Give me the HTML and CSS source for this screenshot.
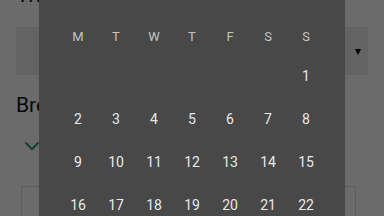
FILE: index.html
```html
<!DOCTYPE html>
<html lang="en">
<head>
    <meta charset="UTF-8">
    <meta name="viewport" content="width=device-width, initial-scale=1.0">
    <title>Trip booking</title>
    <link rel="stylesheet" href="styles.css">
</head>
<body>
    <div class="page">
        <h1 class="page-title">Trip details</h1>

        <div class="select-box">
            <span class="select-value"></span>
            <span class="select-arrow"></span>
        </div>

        <h2 class="section-label">Breakfast</h2>

        <div class="toggle">
            <svg class="chevron" width="16" height="10" viewBox="0 0 16 10">
                <path d="M1.5 1.5 L8 8 L14.5 1.5" fill="none" stroke="currentColor" stroke-width="2"/>
            </svg>
        </div>

        <div class="card"></div>
    </div>

    <div class="overlay">
        <div class="dialog">
            <div class="weekdays">
                <span>M</span><span>T</span><span>W</span><span>T</span><span>F</span><span>S</span><span>S</span>
            </div>
            <div class="days">
                <span></span><span></span><span></span><span></span><span></span><span></span><span>1</span>
                <span>2</span><span>3</span><span>4</span><span>5</span><span>6</span><span>7</span><span>8</span>
                <span>9</span><span>10</span><span>11</span><span>12</span><span>13</span><span>14</span><span>15</span>
                <span>16</span><span>17</span><span>18</span><span>19</span><span>20</span><span>21</span><span>22</span>
                <span>23</span><span>24</span><span>25</span><span>26</span><span>27</span><span>28</span><span>29</span>
            </div>
        </div>
    </div>
</body>
</html>
```

FILE: styles.css
```css
* {
    margin: 0;
    padding: 0;
    box-sizing: border-box;
}

html, body {
    height: 100%;
    overflow: hidden;
}

body {
    background-color: #ffffff;
    color: #111111;
    font-family: Roboto, 'Liberation Sans', sans-serif;
}

.page {
    margin-top: -19px;
    padding: 0 16px;
}

.page-title {
    font-size: 22px;
    font-weight: 400;
    line-height: 28px;
}

.select-box {
    margin-top: 18px;
    height: 48px;
    background-color: #ececec;
    display: flex;
    align-items: center;
    justify-content: flex-end;
    padding-right: 7px;
}

.select-arrow {
    width: 0;
    height: 0;
    border-left: 3.5px solid transparent;
    border-right: 3.5px solid transparent;
    border-top: 6px solid #000000;
    margin-top: 2px;
}

.section-label {
    margin-top: 16px;
    font-size: 21px;
    font-weight: 400;
    line-height: 28px;
}

.toggle {
    margin-top: 22px;
    padding-left: 8px;
    height: 12px;
    color: #2e9a72;
}

.chevron {
    display: block;
}

.card {
    margin: 33px 12px 0 5px;
    height: 60px;
    border: 1px solid #dedede;
    border-bottom: none;
    background-color: #ffffff;
}

.overlay {
    position: fixed;
    inset: 0;
    background-color: rgba(0, 0, 0, 0.58);
}

.dialog {
    position: absolute;
    left: 39px;
    top: 0;
    width: 306px;
    height: 240px;
    background-color: #484848;
    padding: 25px 20px 0 20px;
}

.weekdays,
.days {
    display: grid;
    grid-template-columns: repeat(7, 1fr);
    text-align: center;
}

.weekdays {
    height: 24px;
    line-height: 24px;
    margin-bottom: 6px;
    font-size: 13px;
    color: #c4c4c4;
}

.days span {
    height: 43px;
    line-height: 43px;
    font-size: 14px;
    color: #e8e8e8;
}
```
